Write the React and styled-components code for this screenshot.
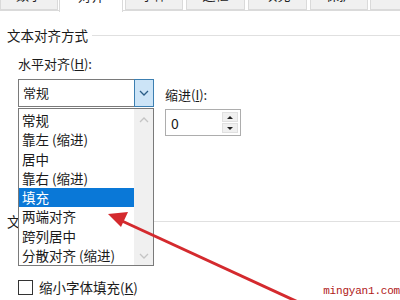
import React from 'react';
import styled, { createGlobalStyle } from 'styled-components';

const Global = createGlobalStyle`
  html, body { margin: 0; padding: 0; background: #fff; }
  body { font-family: "Noto Sans CJK SC", "Noto Sans", sans-serif; color: #1a1a1a; }
`;

const Page = styled.div`
  position: relative;
  width: 400px;
  height: 300px;
  overflow: hidden;
  background: #fff;
  font-size: 13px;
`;

const TabStrip = styled.div`
  display: flex;
  align-items: flex-end;
  height: 10px;
  border-bottom: 1px solid #dadada;
  background: #fff;
`;

const Tab = styled.div`
  flex: none;
  width: ${p => p.w}px;
  margin-right: ${p => p.gap}px;
  height: ${p => (p.active ? 12 : 10)}px;
  margin-bottom: ${p => (p.active ? -2 : 0)}px;
  background: ${p => (p.active ? '#fff' : '#f0f0f0')};
  border: 1px solid #dadada;
  border-top: none;
  border-bottom: ${p => (p.active ? 'none' : '1px solid #dadada')};
  box-sizing: border-box;
  overflow: hidden;
  position: relative;
  span {
    position: absolute;
    left: 0;
    right: 0;
    bottom: ${p => (p.active ? 8 : 6)}px;
    text-align: center;
    font-size: 13px;
    line-height: 16px;
    color: #222;
  }
`;

const Content = styled.div`
  padding: 16px 0 0 7px;
`;

const Section = styled.div`
  display: flex;
  align-items: center;
  gap: 4px;
  height: 16px;
  font-size: 13.5px;
  &::after {
    content: '';
    flex: 1;
    height: 1px;
    background: #e0e0e0;
  }
`;

const Group = styled.div`
  padding-left: 11px;
`;

const Label = styled.div`
  font-size: 13px;
  line-height: 16px;
  height: 16px;
  u { text-decoration: underline; }
`;

const Row = styled.div`
  display: flex;
  gap: 11px;
`;

const Col = styled.div`
  display: flex;
  flex-direction: column;
`;

const Select = styled.div`
  display: flex;
  width: 136px;
  height: 28px;
  box-sizing: border-box;
  border: 1px solid #7a7a7a;
  border-right: none;
  background: #fff;
`;

const SelectText = styled.div`
  flex: 1;
  padding-left: 4px;
  line-height: 26px;
`;

const DropButton = styled.div`
  width: 20px;
  height: 28px;
  margin-top: -1px;
  box-sizing: border-box;
  border: 1px solid #3c7fb1;
  background: #cce4f7;
  display: flex;
  align-items: center;
  justify-content: center;
`;

const Spin = styled.div`
  display: flex;
  align-items: center;
  width: 76px;
  height: 27px;
  box-sizing: border-box;
  border: 1px solid #adadad;
  padding: 0 2px 0 5px;
`;

const SpinText = styled.div`
  flex: 1;
  font-size: 14px;
`;

const SpinButtons = styled.div`
  display: flex;
  flex-direction: column;
  gap: 1px;
`;

const SpinBtn = styled.div`
  width: 16px;
  height: 10px;
  background: #f0f0f0;
  border: 1px solid #e0e0e0;
  box-sizing: border-box;
  display: flex;
  align-items: center;
  justify-content: center;
  &::before {
    content: '';
    border-left: 3px solid transparent;
    border-right: 3px solid transparent;
    ${p => (p.down ? 'border-top: 3px solid #222;' : 'border-bottom: 3px solid #222;')}
  }
`;

const CheckRow = styled.div`
  display: flex;
  align-items: center;
  gap: 6px;
  margin: 48px 0 0 11px;
  font-size: 13.5px;
`;

const Box = styled.div`
  width: 15px;
  height: 15px;
  box-sizing: border-box;
  border: 1px solid #333;
  background: #fff;
`;

const List = styled.div`
  position: absolute;
  left: 18px;
  top: 108px;
  width: 136px;
  height: 158px;
  box-sizing: border-box;
  border: 1px solid #7a7a7a;
  background: #fff;
  display: flex;
`;

const Items = styled.div`
  flex: 1;
  padding-top: 2px;
`;

const Item = styled.div`
  height: 19.3px;
  line-height: 19px;
  padding-left: 3px;
  font-size: 13.5px;
  color: ${p => (p.selected ? '#fff' : '#1a1a1a')};
  background: ${p => (p.selected ? '#0a78d7' : 'transparent')};
`;

const ScrollBar = styled.div`
  width: 19px;
  background: #f0f0f0;
  display: flex;
  flex-direction: column;
  justify-content: space-between;
  align-items: center;
  padding: 8px 0 6px;
`;

const Watermark = styled.div`
  position: absolute;
  right: 0;
  bottom: 3px;
  font-family: "Liberation Mono", monospace;
  font-size: 11px;
  color: #b01818;
  letter-spacing: -0.2px;
`;

const Overlay = styled.svg`
  position: absolute;
  left: 0;
  top: 0;
  pointer-events: none;
`;

const Chevron = ({ up, color = '#333' }) => (
  <svg width="10" height="6" viewBox="0 0 10 6">
    <path d={up ? 'M1 5 L5 1 L9 5' : 'M1 1 L5 5 L9 1'} fill="none" stroke={color} strokeWidth="1.3" />
  </svg>
);

const tabs = [
  { t: '数字', w: 58, gap: 1 },
  { t: '对齐', w: 64, gap: 2, active: true },
  { t: '字体', w: 58, gap: 3 },
  { t: '边框', w: 59, gap: 3 },
  { t: '填充', w: 59, gap: 3 },
  { t: '保护', w: 58, gap: 2 },
  { t: '', w: 40, gap: 0 },
];

const options = ['常规', '靠左 (缩进)', '居中', '靠右 (缩进)', '填充', '两端对齐', '跨列居中', '分散对齐 (缩进)'];

export default function App() {
  return (
    <Page>
      <Global />
      <TabStrip>
        {tabs.map((tab, i) => (
          <Tab key={i} w={tab.w} gap={tab.gap} active={tab.active}>
            <span>{tab.t}</span>
          </Tab>
        ))}
      </TabStrip>
      <Content>
        <Section>文本对齐方式</Section>
        <Group>
          <Label style={{ marginTop: 13 }}>水平对齐(<u>H</u>):</Label>
          <Row style={{ marginTop: 7 }}>
            <Col>
              <Select>
                <SelectText>常规</SelectText>
                <DropButton><Chevron color="#2b5d87" /></DropButton>
              </Select>
            </Col>
            <Col style={{ paddingTop: 8 }}>
              <Label>缩进(<u>I</u>):</Label>
              <Spin style={{ marginTop: 6 }}>
                <SpinText>0</SpinText>
                <SpinButtons>
                  <SpinBtn />
                  <SpinBtn down />
                </SpinButtons>
              </Spin>
            </Col>
          </Row>
        </Group>
        <Section style={{ marginTop: 77 }}>文本控制</Section>
        <CheckRow>
          <Box />
          <span>缩小字体填充(<u>K</u>)</span>
        </CheckRow>
      </Content>
      <List>
        <Items>
          {options.map(o => (
            <Item key={o} selected={o === '填充'}>{o}</Item>
          ))}
        </Items>
        <ScrollBar>
          <Chevron up color="#c4c4c4" />
          <Chevron color="#c4c4c4" />
        </ScrollBar>
      </List>
      <Overlay width="400" height="300" viewBox="0 0 400 300">
        <line x1="298" y1="302" x2="122" y2="221" stroke="#d42a2e" strokeWidth="3" />
        <polygon points="108,214 128,212 121,227" fill="#d42a2e" />
      </Overlay>
      <Watermark>mingyan1.com</Watermark>
    </Page>
  );
}
